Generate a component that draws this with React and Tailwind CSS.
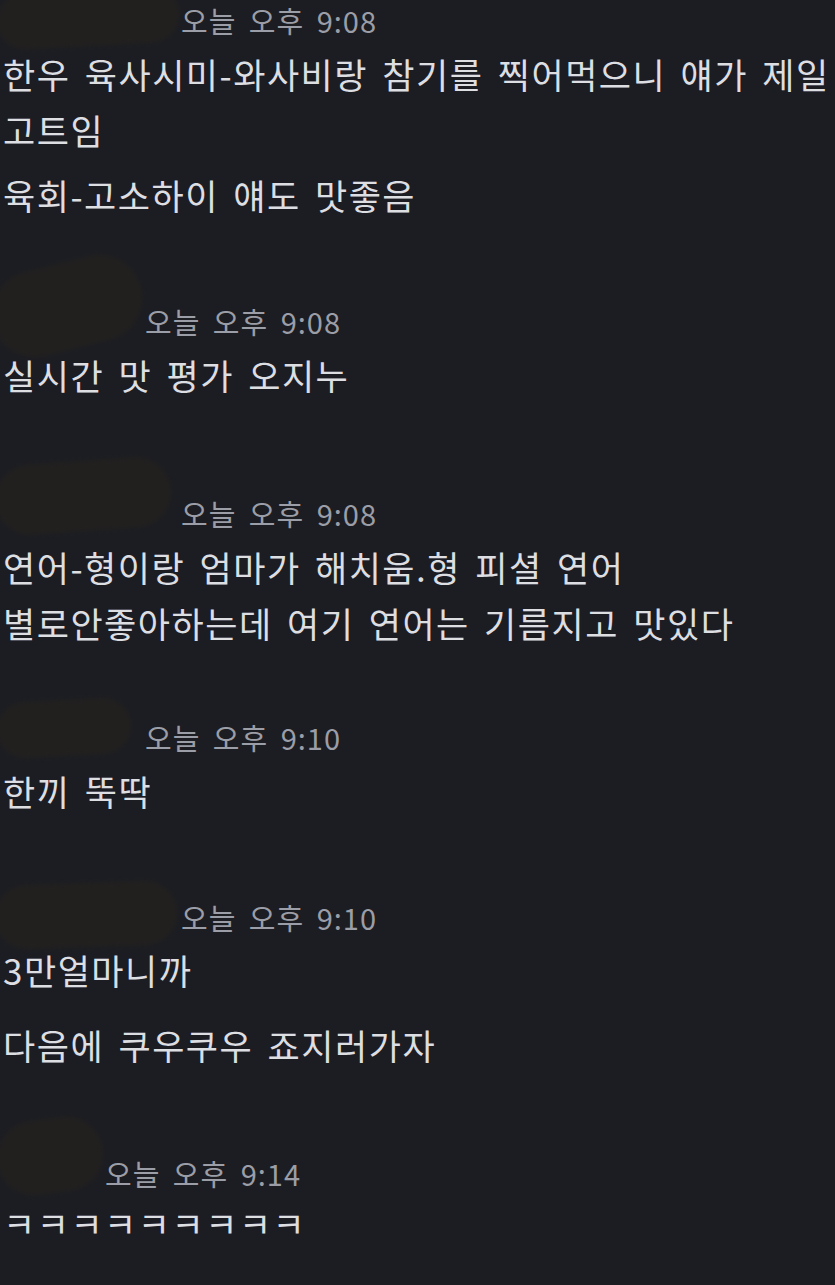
const font = { fontFamily: '"Noto Sans CJK KR", "Noto Sans", sans-serif' };

const groups = [
  {
    name: 178,
    time: "오늘 오후 9:08",
    mt: "mt-0",
    blob: "left-[-6px] top-[-10px] w-[182px] h-[56px] rotate-[-3deg]",
    lines: [
      { text: "한우 육사시미-와사비랑 참기를 찍어먹으니 얘가 제일", mt: "mt-[6px]" },
      { text: "고트임", mt: "mt-0" },
      { text: "육회-고소하이 얘도 맛좋음", mt: "mt-[9px]" },
    ],
  },
  {
    name: 142,
    time: "오늘 오후 9:08",
    mt: "mt-[78px]",
    blob: "left-[-12px] top-[-38px] w-[152px] h-[86px] rotate-[-14deg]",
    lines: [{ text: "실시간 맛 평가 오지누", mt: "mt-[6px]" }],
  },
  {
    name: 178,
    time: "오늘 오후 9:08",
    mt: "mt-[90px]",
    blob: "left-[-8px] top-[-32px] w-[176px] h-[70px] rotate-[-4deg]",
    lines: [
      { text: "연어-형이랑 엄마가 해치움.형 피셜 연어", mt: "mt-[6px]" },
      { text: "별로안좋아하는데 여기 연어는 기름지고 맛있다", mt: "mt-0" },
    ],
  },
  {
    name: 142,
    time: "오늘 오후 9:10",
    mt: "mt-[66px]",
    blob: "left-[-6px] top-[-17px] w-[134px] h-[56px] rotate-[-3deg]",
    lines: [{ text: "한끼 뚝딱", mt: "mt-[6px]" }],
  },
  {
    name: 178,
    time: "오늘 오후 9:10",
    mt: "mt-[78px]",
    blob: "left-[-8px] top-[-14px] w-[182px] h-[64px] rotate-[-2deg]",
    lines: [
      { text: "3만얼마니까", mt: "mt-[5px]" },
      { text: "다음에 쿠우쿠우 죠지러가자", mt: "mt-[19px]" },
    ],
  },
  {
    name: 102,
    time: "오늘 오후 9:14",
    mt: "mt-[80px]",
    blob: "left-[-6px] top-[-34px] w-[106px] h-[74px] rotate-[-8deg]",
    lines: [{ text: "ㅋㅋㅋㅋㅋㅋㅋㅋㅋ", mt: "mt-[2px]" }],
  },
];

function Header({ name, time, blob }) {
  return (
    <div className="flex items-center h-[40px]">
      <div className="relative h-full shrink-0" style={{ width: name }}>
        <div className={`absolute rounded-full bg-[#22201f] blur-[2px] ${blob}`} />
      </div>
      <span className="text-[29px] leading-[40px] tracking-[1px] [word-spacing:5px] text-[#9b9da7] whitespace-nowrap">
        {time}
      </span>
    </div>
  );
}

export default function App() {
  return (
    <div className="w-[835px] h-[1285px] overflow-hidden bg-[#1c1d22] pl-[3px]" style={font}>
      {groups.map((g, i) => (
        <div key={i} className={g.mt}>
          <Header name={g.name} time={g.time} blob={g.blob} />
          {g.lines.map((l, j) => (
            <div
              key={j}
              className={`${l.mt} text-[35px] leading-[56px] tracking-[1.5px] [word-spacing:5px] text-[#dddee2] whitespace-nowrap`}
            >
              {l.text}
            </div>
          ))}
        </div>
      ))}
    </div>
  );
}
